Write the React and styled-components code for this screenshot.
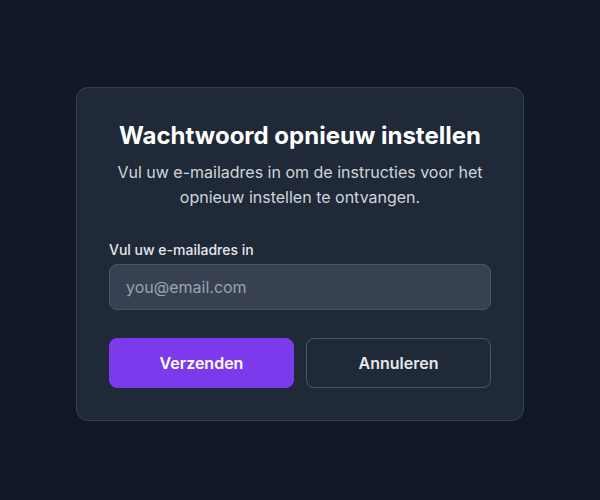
import React from 'react'
import styled, { createGlobalStyle } from 'styled-components'

const GlobalStyle = createGlobalStyle`
  * { box-sizing: border-box; }
  body {
    margin: 0;
    background: #111827;
    font-family: Inter, "Noto Sans", sans-serif;
  }
`

function App() {
  return (
    <Page>
      <GlobalStyle />
      <Card>
        <Title>Wachtwoord opnieuw instellen</Title>
        <Subtitle>
          Vul uw e-mailadres in om de instructies voor het opnieuw instellen te ontvangen.
        </Subtitle>
        <Field>
          <Label htmlFor="email">Vul uw e-mailadres in</Label>
          <Input id="email" type="email" placeholder="you@email.com" />
        </Field>
        <Actions>
          <Button primary>Verzenden</Button>
          <Button>Annuleren</Button>
        </Actions>
      </Card>
    </Page>
  )
}

export default App

const Page = styled.div`
  min-height: 100vh;
  display: flex;
  justify-content: center;
  align-items: center;
  padding-top: 7px;
`

const Card = styled.div`
  width: 448px;
  background: #1f2937;
  border: 1px solid #374151;
  border-radius: 12px;
  padding: 32px;
`

const Title = styled.h1`
  margin: 0;
  font-size: 24px;
  line-height: 32px;
  font-weight: 700;
  color: #ffffff;
  text-align: center;
`

const Subtitle = styled.p`
  margin: 8px 0 0;
  font-size: 16px;
  line-height: 25px;
  color: #d1d5db;
  text-align: center;
`

const Field = styled.div`
  margin-top: 30px;
  display: flex;
  flex-direction: column;
  gap: 4px;
`

const Label = styled.label`
  font-size: 14px;
  line-height: 20px;
  font-weight: 500;
  color: #e5e7eb;
`

const Input = styled.input`
  height: 46px;
  padding: 0 16px;
  background: #374151;
  border: 1px solid #4b5563;
  border-radius: 8px;
  font-family: inherit;
  font-size: 16px;
  color: #f3f4f6;
  outline: none;

  &::placeholder {
    color: #9ca3af;
  }
`

const Actions = styled.div`
  margin-top: 28px;
  display: flex;
  gap: 12px;
`

const Button = styled.button`
  flex: 1;
  height: 50px;
  border-radius: 8px;
  font-family: inherit;
  font-size: 16px;
  font-weight: 600;
  cursor: pointer;
  background: ${p => (p.primary ? '#7c3aed' : 'transparent')};
  color: ${p => (p.primary ? '#ffffff' : '#e5e7eb')};
  border: 1px solid ${p => (p.primary ? '#7c3aed' : '#4b5563')};
`
